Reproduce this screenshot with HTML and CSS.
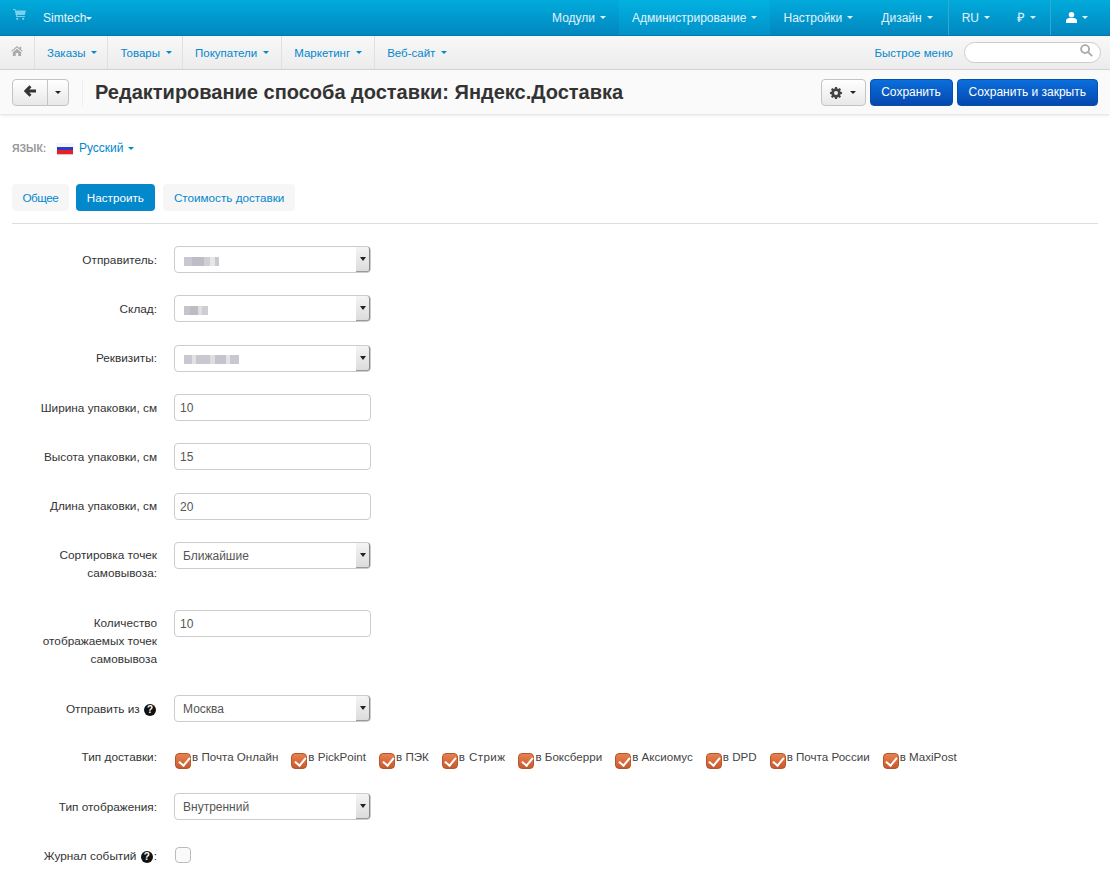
FILE: index.html
```html
<!DOCTYPE html>
<html lang="ru">
  <head>
    <meta charset="UTF-8" />
    <title>Редактирование способа доставки: Яндекс.Доставка</title>
    <link rel="stylesheet" href="styles.css">
  </head>
  <body>
    <header class="topbar">
      <div class="topbar-left">
        <svg class="cart" viewBox="0 0 14 12" width="13" height="11"><path d="M0 0h2.500l.4 1.500H14l-1.200 5H4.200l.3 1.200h8.300v1.100H3.500L1.700 1.100H0zM4.500 9.500a1.200 1.200 0 1 1 0 2.400 1.200 1.200 0 0 1 0-2.400zM11 9.500a1.200 1.200 0 1 1 0 2.400 1.200 1.200 0 0 1 0-2.400z"/></svg>
        <a class="brand">Simtech<i class="caret caret-tight"></i></a>
      </div>
      <nav class="topnav">
        <a>Модули<i class="caret"></i></a>
        <a class="active">Администрирование<i class="caret"></i></a>
        <a>Настройки<i class="caret"></i></a>
        <a class="last-main">Дизайн<i class="caret"></i></a>
        <a class="sep">RU<i class="caret"></i></a>
        <a class="currency">₽<i class="caret"></i></a>
        <a class="sep user">
          <svg viewBox="0 0 12 12" width="11" height="11" fill="#fff"><circle cx="6" cy="3" r="3"/><path d="M0 12V9.500C0 7.500 2 6.500 3.500 6.500h5C10 6.500 12 7.500 12 9.500V12z"/></svg>
          <i class="caret"></i>
        </a>
      </nav>
    </header>

    <div class="subnav">
      <a class="home">
        <svg viewBox="0 0 14 12" width="12" height="10" fill="#aaa"><path d="M7 0l3 2.600V1h2v3.300L14 6l-.8.900L7 1.700.8 6.900 0 6zM2 7.500L7 3.300l5 4.200V12H8.500V8.500h-3V12H2z"/></svg>
      </a>
      <a>Заказы<i class="caret"></i></a>
      <a>Товары<i class="caret"></i></a>
      <a class="wide">Покупатели<i class="caret"></i></a>
      <a class="wide">Маркетинг<i class="caret"></i></a>
      <a>Веб-сайт<i class="caret"></i></a>
      <div class="quick">
        <span class="quick-link">Быстрое меню</span>
        <div class="search">
          <svg viewBox="0 0 14 14" width="13" height="13" fill="none" stroke="#aaa" stroke-width="2"><circle cx="5.500" cy="5.500" r="4.300"/><path d="M8.800 8.800L13 13"/></svg>
        </div>
      </div>
    </div>

    <div class="toolbar">
      <div class="btn-group">
        <button class="btn btn-back">
          <svg viewBox="0 0 12 12" width="12" height="12" fill="none" stroke="#333" stroke-width="2.800"><path d="M6.500 1.200L1.800 6l4.700 4.800M2 6h10"/></svg>
        </button>
        <button class="btn btn-drop"><i class="caret caret-dark caret-tight"></i></button>
      </div>
      <h1>Редактирование способа доставки: Яндекс.Доставка</h1>
      <div class="actions">
        <button class="btn btn-gear">
          <svg viewBox="0 0 12 12" width="12" height="12" fill="#444"><path d="M5 0h2l.3 1.600 1 .4L9.700 1.100l1.300 1.300-.9 1.400.4 1 1.500.2v2l-1.500.3-.4 1 .9 1.300L9.700 10.900l-1.400-.9-1 .4L7 12H5l-.3-1.600-1-.4-1.400.9L1 9.600l.9-1.300-.4-1L0 7V5l1.500-.2.400-1L1 2.400l1.300-1.300 1.400.9 1-.4zM6 4a2 2 0 1 0 0 4 2 2 0 0 0 0-4z" fill-rule="evenodd"/></svg>
          <i class="caret caret-dark caret-tight"></i>
        </button>
        <button class="btn btn-primary btn-save">Сохранить</button>
        <button class="btn btn-primary">Сохранить и закрыть</button>
      </div>
    </div>

    <main class="content">
      <div class="lang">
        <span class="lang-label">ЯЗЫК:</span>
        <span class="flag"></span>
        <a class="lang-link">Русский<i class="caret caret-blue caret-tight"></i></a>
      </div>

      <ul class="tabs">
        <li>Общее</li>
        <li class="active">Настроить</li>
        <li>Стоимость доставки</li>
      </ul>

      <form class="form">
        <div class="row">
          <label>Отправитель:</label>
          <div class="select"><span class="smudge smudge-a"></span><b class="select-arrow"><i class="caret caret-dark caret-tight"></i></b></div>
        </div>
        <div class="row">
          <label>Склад:</label>
          <div class="select"><span class="smudge smudge-b"></span><b class="select-arrow"><i class="caret caret-dark caret-tight"></i></b></div>
        </div>
        <div class="row">
          <label>Реквизиты:</label>
          <div class="select"><span class="smudge smudge-c"></span><b class="select-arrow"><i class="caret caret-dark caret-tight"></i></b></div>
        </div>
        <div class="row">
          <label>Ширина упаковки, см</label>
          <div class="input">10</div>
        </div>
        <div class="row">
          <label>Высота упаковки, см</label>
          <div class="input">15</div>
        </div>
        <div class="row">
          <label>Длина упаковки, см</label>
          <div class="input">20</div>
        </div>
        <div class="row row-wrap">
          <label>Сортировка точек самовывоза:</label>
          <div class="select">Ближайшие<b class="select-arrow"><i class="caret caret-dark caret-tight"></i></b></div>
        </div>
        <div class="row">
          <label>Количество отображаемых точек самовывоза</label>
          <div class="input">10</div>
        </div>
        <div class="row">
          <label>Отправить из <span class="help">?</span></label>
          <div class="select">Москва<b class="select-arrow"><i class="caret caret-dark caret-tight"></i></b></div>
        </div>
        <div class="row row-checks">
          <label>Тип доставки:</label>
          <div class="checks">
            <span class="check-item"><i class="check on"></i>в Почта Онлайн</span>
            <span class="check-item"><i class="check on"></i>в PickPoint</span>
            <span class="check-item"><i class="check on"></i>в ПЭК</span>
            <span class="check-item"><i class="check on"></i>в Стриж</span>
            <span class="check-item"><i class="check on"></i>в Боксберри</span>
            <span class="check-item"><i class="check on"></i>в Аксиомус</span>
            <span class="check-item"><i class="check on"></i>в DPD</span>
            <span class="check-item"><i class="check on"></i>в Почта России</span>
            <span class="check-item"><i class="check on"></i>в MaxiPost</span>
          </div>
        </div>
        <div class="row">
          <label>Тип отображения:</label>
          <div class="select">Внутренний<b class="select-arrow"><i class="caret caret-dark caret-tight"></i></b></div>
        </div>
        <div class="row">
          <label>Журнал событий <span class="help">?</span>:</label>
          <div class="checks"><i class="check check-single"></i></div>
        </div>
      </form>
    </main>
  </body>
</html>
```

FILE: styles.css
```css
* {
  box-sizing: border-box;
}

html,
body {
  height: 885px;
  overflow: hidden;
}

body {
  margin: 0;
  background-color: #fff;
  font-family: "Liberation Sans", Arial, sans-serif;
  font-size: 11.8px;
  line-height: 18px;
  color: #333;
}

.caret {
  display: inline-block;
  width: 0;
  height: 0;
  margin-left: 5px;
  border-top: 3px solid currentColor;
  border-left: 3px solid transparent;
  border-right: 3px solid transparent;
  vertical-align: middle;
}

.caret-tight {
  margin-left: 0;
}

.caret-dark {
  color: #222;
}

.caret-blue {
  color: #0388cc;
  margin-left: 4px;
}

/* top bar */
.topbar {
  display: flex;
  justify-content: space-between;
  height: 36px;
  background: linear-gradient(#01abdc, #0187bf);
  border-bottom: 1px solid #0179ad;
  color: #fff;
  font-size: 12px;
}

.topbar-left {
  display: flex;
  align-items: center;
  padding-left: 13px;
}

.cart {
  fill: #7cd0ec;
  margin: -6px 17px 0 0;
}

.brand {
  color: #e9f6fb;
}

.topnav {
  display: flex;
}

.topnav a {
  display: flex;
  align-items: center;
  padding: 0 13px;
  color: #e2f3fa;
}

.topnav a.active {
  background: linear-gradient(#02b1e0, #0192c9);
}

.topnav a.last-main {
  padding-left: 15px;
  padding-right: 15px;
}

.topnav a.sep {
  border-left: 1px solid #32a9d5;
}

.topnav a.currency {
  padding-left: 14px;
  padding-right: 14px;
  font-size: 13px;
}

.topnav a.user {
  padding: 0 22px 0 15px;
}

/* second menu */
.subnav {
  display: flex;
  height: 34px;
  background: linear-gradient(#f8f8f8, #ececec);
  border-bottom: 1px solid #d8d8d8;
  color: #0388cc;
  font-size: 11.5px;
}

.subnav > a {
  display: flex;
  align-items: center;
  padding: 0 10px 0 12px;
  border-right: 1px solid #e0e0e0;
}

.subnav > a.wide {
  padding-right: 12px;
}

.subnav > a:nth-child(6) {
  border-right: none;
}

.subnav > a.home {
  width: 35px;
  padding: 0 0 3px 11px;
}

.subnav .caret {
  margin-left: 6px;
}

.quick {
  display: flex;
  align-items: center;
  gap: 11px;
  margin-left: auto;
  padding-right: 9px;
}

.search {
  display: flex;
  justify-content: flex-end;
  width: 137px;
  height: 21px;
  padding: 1px 7px 0 0;
  border: 1px solid #ccc;
  border-radius: 11px;
  background-color: #fff;
}

/* page header */
.toolbar {
  display: flex;
  align-items: center;
  height: 44px;
  padding: 0 12px;
  background-color: #fafafa;
  box-shadow: 0 1px 3px rgba(0, 0, 0, 0.15);
}

.btn {
  height: 27px;
  border: 1px solid #c4c4c4;
  border-radius: 4px;
  background: linear-gradient(#fff, #e8e8e8);
  font-family: inherit;
  font-size: 12px;
  padding: 0;
}

.btn-group {
  display: flex;
  padding-right: 13px;
  border-right: 1px solid #eee;
}

.btn-back {
  width: 36px;
  border-radius: 4px 0 0 4px;
}

.btn-drop {
  width: 22px;
  margin-left: -1px;
  border-radius: 0 4px 4px 0;
}

h1 {
  margin: 0 0 0 12px;
  font-size: 20px;
  line-height: 26px;
  color: #333;
}

.actions {
  display: flex;
  gap: 4px;
  margin-left: auto;
}

.btn-gear {
  width: 45px;
}

.btn-gear svg {
  vertical-align: middle;
  margin-right: 4px;
}

.btn-primary {
  padding: 0 11px;
  border-color: #0550a8;
  background: linear-gradient(#0b6fdc, #0448ae);
  color: #fff;
}

.btn-save {
  width: 83px;
  padding: 0;
}

/* content */
.content {
  padding: 25px 12px 0;
}

.lang {
  display: flex;
  align-items: center;
  height: 18px;
}

.lang-label {
  width: 45px;
  font-size: 10.5px;
  font-weight: bold;
  color: #999;
}

.flag {
  width: 16px;
  height: 11px;
  margin-right: 6px;
  background: linear-gradient(#f4f4f4 33%, #2a3fc0 33% 66%, #e4202c 66%);
  box-shadow: 0 1px 1px rgba(0, 0, 0, 0.2);
}

.lang-link {
  color: #0388cc;
  font-size: 12px;
}

.tabs {
  display: flex;
  gap: 7px;
  margin: 27px 0 0;
  padding: 0 0 12px;
  font-size: 11.7px;
  list-style: none;
  border-bottom: 1px solid #ddd;
}

.tabs li {
  height: 27px;
  padding: 0 11px;
  border-radius: 4px;
  background-color: #f6f6f6;
  color: #0388cc;
  line-height: 28px;
}

.tabs li:first-child {
  padding: 0 10.5px;
  letter-spacing: -0.5px;
}

.tabs li:last-child {
  margin-left: 1px;
}

.tabs li.active {
  background-color: #0388cc;
  color: #fff;
}

/* form */
.form {
  padding-top: 22.2px;
}

.row {
  display: flex;
  margin-bottom: 22.3px;
}

.row-wrap {
  margin-bottom: 23px;
}

.row-checks {
  margin-bottom: 21.7px;
}

.row label {
  flex: none;
  width: 130px;
  margin: 0 17px 0 15px;
  padding: 4.5px 0;
  text-align: right;
  color: #333;
}

.row-checks label {
  padding-top: 3px;
}

.input,
.select {
  position: relative;
  width: 197px;
  height: 27px;
  padding: 0 8px;
  border: 1px solid #ccc;
  border-radius: 4px;
  background-color: #fff;
  font-size: 12px;
  line-height: 26px;
  color: #555;
}

.input {
  padding: 0 5px;
}

.select-arrow {
  position: absolute;
  top: 0;
  right: 0;
  display: flex;
  align-items: center;
  justify-content: center;
  width: 14px;
  height: 25px;
  background: linear-gradient(#f4f4f4, #dcdcdc);
  border-right: 1px solid #888;
  border-bottom: 1px solid #999;
  border-radius: 0 3px 3px 0;
}

.select-arrow .caret {
  border-top-width: 4px;
  border-left-width: 3.5px;
  border-right-width: 3.5px;
}

.smudge {
  display: inline-block;
  height: 9px;
  vertical-align: middle;
  margin: 0 0 0 1px;
  filter: blur(0.7px);
}

.smudge-a {
  width: 35px;
  background: linear-gradient(90deg, #c8c8d2 0 8px, #bdbdc8 8px 20px, #cfcfd4 20px 26px, #e6e6e6 26px 31px, #c9c9cf 31px);
}

.smudge-b {
  width: 24px;
  background: linear-gradient(90deg, #c4c4cc 0 6px, #bcbcc4 6px 14px, #dedede 14px 18px, #cdcdd2 18px);
}

.smudge-c {
  width: 55px;
  background: linear-gradient(90deg, #c8c8d0 0 8px, #e2e2e2 8px 12px, #c8c8d0 12px 26px, #dedede 26px 31px, #c4c4cc 31px 42px, #e4e4e4 42px 46px, #c8c8d0 46px);
}

.help {
  display: inline-block;
  width: 12px;
  height: 12px;
  margin: 0 1px;
  border-radius: 50%;
  background-color: #111;
  color: #fff;
  font-size: 10px;
  font-weight: bold;
  line-height: 12px;
  text-align: center;
}

.checks {
  display: flex;
  gap: 12px;
  height: 27px;
  padding-top: 4px;
}

.check-item {
  display: flex;
  align-items: flex-start;
  margin-top: -1px;
  font-size: 11.6px;
  line-height: 18px;
  color: #444;
}

.check-item:nth-child(4) {
  letter-spacing: 0.4px;
}

.check {
  display: block;
  flex: none;
  width: 16px;
  height: 16px;
  margin: 2px 1px 0 1px;
  border: 1px solid #bbb;
  border-radius: 4px;
  background-color: #fafafa;
}

.check-item .check {
  margin-top: 5px;
}

.check-single {
  margin-top: 0;
}

.check.on {
  position: relative;
  border-color: #b5552c;
  background: linear-gradient(#e8814f, #c8592e);
}

.check.on::after {
  content: "";
  position: absolute;
  left: 4.5px;
  top: 1px;
  width: 5px;
  height: 9px;
  border: solid #fff;
  border-width: 0 2.5px 2.5px 0;
  transform: rotate(40deg);
}
```
